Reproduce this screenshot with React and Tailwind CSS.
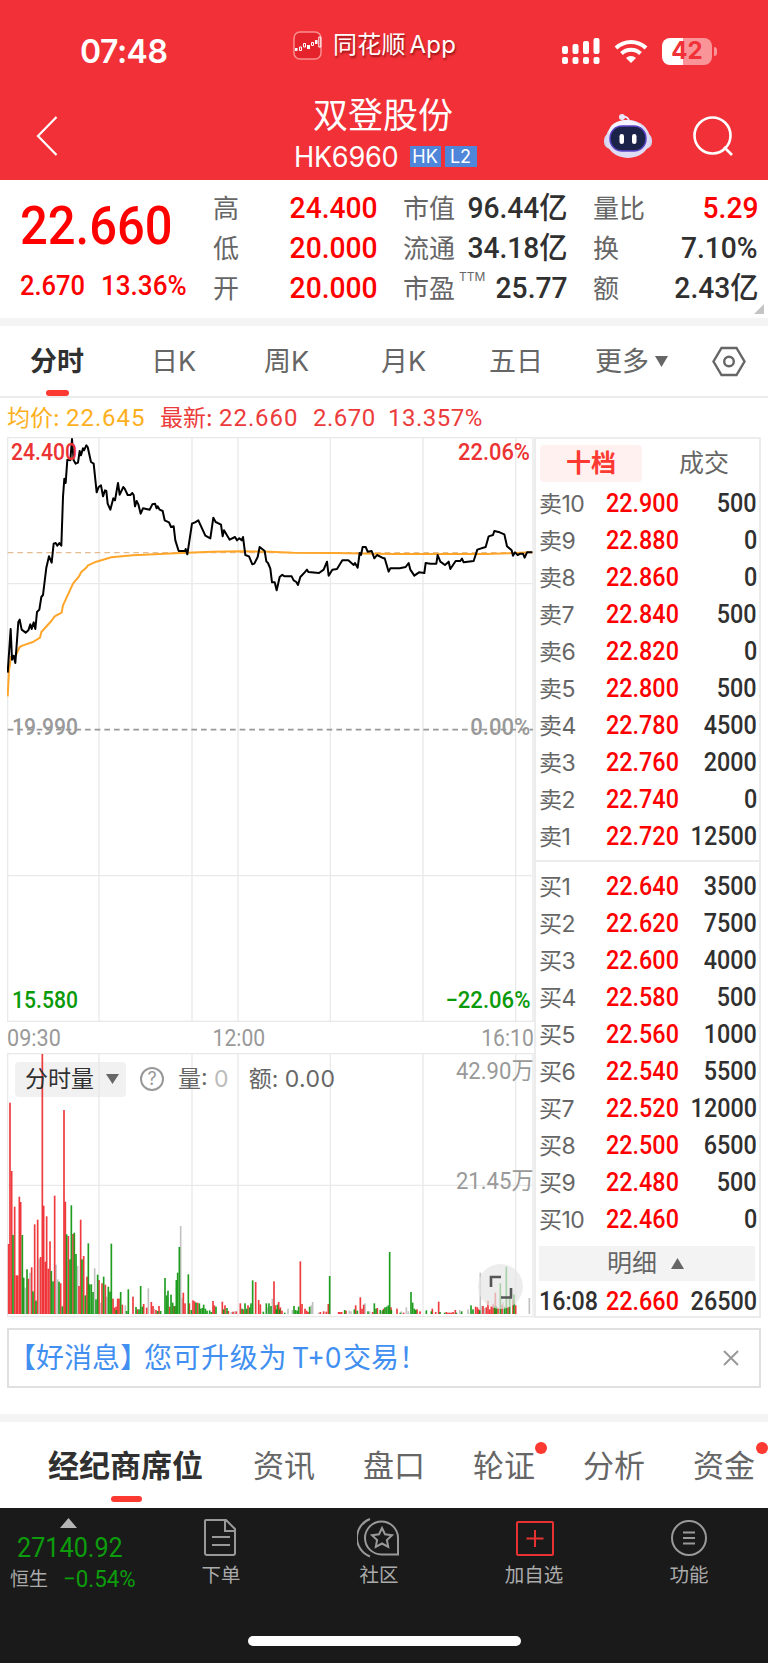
const asks = [
  ['卖10', '22.900', '500'],
  ['卖9', '22.880', '0'],
  ['卖8', '22.860', '0'],
  ['卖7', '22.840', '500'],
  ['卖6', '22.820', '0'],
  ['卖5', '22.800', '500'],
  ['卖4', '22.780', '4500'],
  ['卖3', '22.760', '2000'],
  ['卖2', '22.740', '0'],
  ['卖1', '22.720', '12500'],
]

const bids = [
  ['买1', '22.640', '3500'],
  ['买2', '22.620', '7500'],
  ['买3', '22.600', '4000'],
  ['买4', '22.580', '500'],
  ['买5', '22.560', '1000'],
  ['买6', '22.540', '5500'],
  ['买7', '22.520', '12000'],
  ['买8', '22.500', '6500'],
  ['买9', '22.480', '500'],
  ['买10', '22.460', '0'],
]

// chart data is stored in thirds of a pixel
const pricePoints =
  '24,727 33,596 37,688 42,676 47,698 56,575 60,568 66,598 78,607 86,600 92,582 96,596 102,576 107,596 112,545 119,538 125,500 130,494 140,412 148,378 156,397 162,340 168,338 173,346 179,338 185,346 190,200 194,145 198,158 203,88 212,90 217,26 222,90 228,100 235,97 240,62 244,75 250,54 253,60 260,45 264,50 274,95 282,100 291,186 297,170 304,165 310,198 316,180 320,182 324,220 332,238 341,204 346,210 355,158 360,193 371,170 375,175 384,194 392,194 398,188 402,194 406,228 411,212 416,222 423,250 430,234 450,238 458,222 466,220 471,234 474,228 480,238 489,242 495,270 508,276 514,290 522,288 527,330 537,362 556,362 558,356 563,372 577,280 586,276 596,270 617,316 632,324 641,262 648,275 664,283 669,318 673,300 690,328 706,320 712,330 719,324 726,330 730,320 737,374 748,378 758,402 764,400 774,380 780,350 795,362 800,393 805,398 812,415 817,456 825,456 831,480 840,440 848,433 854,438 876,438 882,450 890,455 895,464 902,440 915,426 922,418 926,425 958,428 972,418 982,394 987,436 998,418 1012,416 1028,390 1046,390 1062,404 1066,398 1074,412 1080,368 1084,374 1089,350 1098,350 1104,364 1116,362 1124,384 1132,374 1152,384 1155,384 1167,424 1172,414 1200,414 1218,410 1227,398 1232,418 1244,436 1258,426 1274,428 1278,398 1292,400 1310,400 1314,374 1322,394 1336,404 1347,394 1352,416 1368,392 1382,392 1387,385 1392,396 1422,392 1433,358 1458,350 1467,318 1480,314 1484,302 1500,306 1514,312 1522,348 1536,360 1540,376 1546,366 1554,374 1562,370 1570,370 1575,382 1582,366 1598,366'

const averagePoints =
  '24,798 28,720 34,680 48,676 60,650 70,645 100,635 121,622 125,605 155,572 165,558 186,547 190,525 220,460 238,438 245,425 258,414 265,405 290,394 335,381 400,375 480,371 560,367 640,364 720,363 810,364 880,367 1000,368 1180,371 1460,371 1598,366'

const redBars =
  '27,854 31,430 36,635 45,742 50,948 54,948 59,712 63,728 86,958 96,924 105,795 114,781 123,893 128,284 132,739 137,907 141,771 146,928 151,846 165,709 183,972 193,452 197,727 206,830 220,824 238,980 243,781 252,890 262,952 298,962 307,972 317,976 340,1018 344,1045 349,1042 354,1018 358,1018 368,1036 400,1012 413,1050 432,1034 441,1045 455,1028 460,1040 469,1052 478,1040 510,1042 523,1040 551,1000 556,1032 569,1032 580,1023 585,1026 594,1030 640,1025 644,1038 668,1027 676,1038 686,1055 700,1057 710,1056 722,1032 731,1050 745,1038 768,968 777,1022 782,1035 823,966 827,1038 837,1028 842,1044 847,1054 902,906 907,1034 916,1048 921,1054 925,1058 962,1058 972,1056 980,1057 986,1034 1017,1058 1021,1058 1026,1058 1039,1054 1068,1038 1082,1014 1087,1048 1092,1036 1119,1058 1133,1046 1152,1048 1174,1044 1192,1048 1212,1060 1252,1050 1261,1056 1298,1048 1308,1058 1317,1027 1340,1058 1345,1060 1350,1060 1355,1060 1360,1058 1367,1052 1428,1042 1433,1044 1437,1050 1450,1040 1460,1044 1465,1024 1470,1050 1475,1040 1480,1035 1487,1000 1495,1046 1507,1036 1525,1042 1540,1020 1548,1038'

const greenBars =
  '40,827 68,827 72,955 82,930 100,996 109,1024 155,935 160,966 178,967 188,1041 201,825 211,900 215,738 224,820 229,884 247,900 257,1008 266,852 270,975 275,975 280,998 289,1020 294,946 312,952 326,982 331,997 335,853 350,1052 363,998 381,1055 386,990 409,1043 418,1050 423,980 428,1042 474,1055 483,1055 496,956 501,1008 505,994 514,1006 519,1030 526,1040 530,962 534,940 539,863 566,945 575,1052 589,1030 599,1032 603,1048 608,1046 612,1036 617,1048 622,1054 630,1053 635,1058 649,1042 672,1050 682,1046 727,1048 736,1032 741,1048 750,1044 754,1032 759,963 791,1057 800,1032 808,1032 814,1040 830,1050 833,1036 840,1050 855,1060 883,1040 888,1052 893,1054 897,1042 930,1042 990,950 1035,1052 1064,1050 1073,1054 1105,1056 1124,1032 1129,1048 1142,1052 1150,1052 1156,1044 1161,1042 1166,1038 1170,878 1175,1052 1202,1060 1234,998 1239,1030 1244,1048 1248,1052 1280,1053 1295,1056 1321,1058 1335,1060 1370,1060 1386,1056 1414,1038 1420,1050 1440,1053 1485,1040 1490,1040 1502,972 1515,1042 1520,922 1530,1010 1543,1005'

const grayBars =
  '77,985 91,940 119,898 169,916 174,960 234,920 285,927 303,1030 321,1012 377,1038 446,987 464,1048 543,800 547,1017 695,1058 705,1056 805,1044 818,1018 865,1048 878,1052 935,1038 939,1028 957,1060 1049,1054 1054,1056 1096,1032 1110,1056 1146,1056 1205,1056 1220,1044 1226,1056 1380,1052 1405,1050 1442,940 1447,1040 1455,1046 1510,1028 1589,1016'

const gridX = [298, 577, 715, 992, 1270, 1548]

function Bars({ data, color }) {
  return data.split(' ').map((item) => {
    const [x, top] = item.split(',').map(Number)
    return <rect key={item} x={x - 2.5} y={top} width="5" height={1064 - top} fill={color} opacity="0.9" />
  })
}

function StatusBar() {
  return (
    <div className="flex h-[96px] items-center text-white">
      <div className="w-[214px] pl-[80px] pt-[7px] text-[33px] font-semibold leading-none tracking-[-0.5px]">
        <span className="inline-block origin-left scale-x-[0.97]">07:48</span>
      </div>
      <div className="flex w-[346px] items-center pb-[6px] pl-[79px]">
        <svg className="h-[29px] w-[29px]" viewBox="0 0 29 29" fill="none">
          <rect x="1" y="1" width="27" height="27" rx="6" fill="#e5232d" stroke="#fa8f8f" strokeWidth="1.5" />
          <path d="M2 17h2.500v3H2zM14 14h3v4h-3zM22 9h2.500v4H22z" fill="#fff" />
          <path d="M6.500 16h2v3.500h-2zM10.500 12.500h2v3.500h-2zM18.500 11.500h2v3h-2zM25.800 6h2v10h-2z" stroke="#fff" />
        </svg>
        <span className="ml-[11px] whitespace-nowrap text-[24px] leading-none tracking-[0.2px] [word-spacing:-3px] [text-shadow:1px_2px_2px_rgba(90,0,0,0.6)]">同花顺 App</span>
      </div>
      <div className="flex items-center pt-[6px]">
        <svg className="h-[28px] w-[41px]" viewBox="0 0 41 28" fill="#fff">
          <rect x="2" y="9" width="6" height="8" rx="2" />
          <rect x="12.500" y="7" width="6" height="10" rx="2" />
          <rect x="23" y="4" width="6" height="13" rx="2" />
          <rect x="33.500" y="1" width="6" height="16" rx="2" />
          <rect x="2" y="20" width="6" height="7" rx="2" />
          <rect x="12.500" y="20" width="6" height="7" rx="2" />
          <rect x="23" y="20" width="6" height="7" rx="2" />
          <rect x="33.500" y="20" width="6" height="7" rx="2" />
        </svg>
        <svg className="ml-[13px] h-[26px] w-[34px]" viewBox="0 0 34 26" fill="none" stroke="#fff" strokeWidth="4">
          <path d="M2 10a21.500 21.500 0 0 1 30 0" />
          <path d="M7.500 15.500a13.700 13.700 0 0 1 19 0" />
          <path d="M17 25l-5-5a7.200 7.200 0 0 1 10 0z" fill="#fff" stroke="none" />
        </svg>
        <div className="ml-[14px] flex h-[27px] w-[50px] items-center justify-center rounded-[8px] bg-linear-to-r from-white from-42% to-[#f99598] to-42% text-[24px] font-bold leading-none text-[#f13037]">42</div>
        <div className="ml-[2px] h-[9px] w-[3px] rounded-r-full bg-[#f99598]" />
      </div>
    </div>
  )
}

function Header() {
  return (
    <header className="h-[180px] bg-[#f13037]">
      <StatusBar />
      <div className="flex h-[79px] items-center text-white">
        <div className="w-[200px] pl-[36px]">
          <svg className="h-[40px] w-[22px]" viewBox="0 0 22 40" fill="none" stroke="#fff" strokeWidth="2.200">
            <path d="M20.500 1L2 20l18.500 19" />
          </svg>
        </div>
        <div className="flex w-[366px] flex-col items-center pt-[2px]">
          <div className="text-[35px] leading-[40px]">双登股份</div>
          <div className="flex h-[43px] items-center pl-1">
            <span className="w-[106px] origin-left scale-x-[0.97] text-[28px] leading-none tracking-[-0.3px]">HK6960</span>
            <span className="ml-[10px] flex h-[21px] w-[31px] items-center justify-center bg-[#4f86d9] text-[18px] leading-none">HK</span>
            <span className="ml-[4px] flex h-[21px] w-[32px] items-center justify-center bg-[#4f86d9] text-[18px] leading-none">L2</span>
          </div>
        </div>
        <svg className="ml-[37px] h-[46px] w-[50px]" viewBox="0 0 50 46">
          <path d="M19 4q7-1 7 5" fill="none" stroke="#e9e6fb" strokeWidth="2" />
          <circle cx="19" cy="4" r="3" fill="#e9e6fb" />
          <rect x="1" y="20" width="48" height="16" rx="7" fill="#d6d3f0" />
          <ellipse cx="25" cy="26" rx="22" ry="19" fill="#dedcf5" />
          <ellipse cx="23" cy="19" rx="17" ry="12" fill="#f6f5ff" />
          <rect x="7" y="13" width="36" height="25" rx="12" fill="#1c2348" stroke="#5b45c9" strokeWidth="1.500" />
          <rect x="16.500" y="21" width="4.500" height="10" rx="2.200" fill="#fff" />
          <rect x="29" y="21" width="4.500" height="10" rx="2.200" fill="#fff" />
        </svg>
        <svg className="ml-[39px] h-[42px] w-[42px]" viewBox="0 0 42 42" fill="none" stroke="#fff" strokeWidth="2.600">
          <circle cx="20.500" cy="20.500" r="18" />
          <path d="M32 32l8 8" />
        </svg>
      </div>
    </header>
  )
}

function Stat({ label, sup, value, red }) {
  return (
    <div className="flex h-[40px] items-center justify-between">
      <span className="flex whitespace-nowrap pt-[2px] text-[26px] leading-none text-[#666]">
        {label}
        {sup && <sup className="ml-[4px] top-[-5px] text-[12px] leading-none">{sup}</sup>}
      </span>
      <span className={`origin-right scale-x-[0.94] whitespace-nowrap font-[Roboto,'Noto_Sans_CJK_SC',sans-serif] text-[30px] font-medium leading-none ${red ? 'text-[#f00]' : 'text-[#303030]'}`}>{value}</span>
    </div>
  )
}

function QuoteSummary() {
  return (
    <section className="relative flex h-[138px] pt-[8px]">
      <div className="w-[213px] pl-[20px] font-[Roboto,sans-serif] font-medium text-[#f00]">
        <div className="flex h-[76px] origin-left scale-x-[0.905] items-center text-[54px] leading-none">22.660</div>
        <div className="mt-[7px] flex h-[30px] items-center gap-[18px] text-[28px] leading-none">
          <span className="w-[63px] origin-left scale-x-[0.91]">2.670</span>
          <span className="origin-left scale-x-[0.93]">13.36%</span>
        </div>
      </div>
      <div className="w-[165px]">
        <Stat label="高" value="24.400" red />
        <Stat label="低" value="20.000" red />
        <Stat label="开" value="20.000" red />
      </div>
      <div className="ml-[25px] w-[165px]">
        <Stat label="市值" value="96.44亿" />
        <Stat label="流通" value="34.18亿" />
        <Stat label="市盈" sup="TTM" value="25.77" />
      </div>
      <div className="ml-[25px] w-[165px]">
        <Stat label="量比" value="5.29" red />
        <Stat label="换" value="7.10%" />
        <Stat label="额" value="2.43亿" />
      </div>
      <svg className="absolute right-[4px] bottom-[4px] h-[10px] w-[10px]" viewBox="0 0 10 10">
        <path d="M10 0v10H0z" fill="#c4c4c4" />
      </svg>
    </section>
  )
}

function PeriodTabs() {
  return (
    <nav className="relative flex h-[72px] items-center border-b-2 border-[#ededed] text-[27px] leading-none text-[#666]">
      <span className="w-[122px] pl-[30px] font-bold text-[#303030]">分时</span>
      <span className="w-[114px] pl-[29px]">日K</span>
      <span className="w-[116px] pl-[28px]">周K</span>
      <span className="w-[110px] pl-[29px]">月K</span>
      <span className="w-[133px] pl-[27px]">五日</span>
      <span className="flex w-[117px] items-center">
        更多
        <svg className="ml-[6px] h-[11px] w-[13px]" viewBox="0 0 13 11">
          <path d="M0 0h13L6.500 11z" fill="#666" />
        </svg>
      </span>
      <svg className="h-[31px] w-[34px]" viewBox="0 0 34 31" fill="none" stroke="#666" strokeWidth="2.400">
        <path d="M9.500 2h15L32.500 15.500l-8 13.500h-15L1.500 15.500z" />
        <circle cx="17" cy="15.500" r="4.800" />
      </svg>
      <i className="absolute bottom-0 left-[46px] h-[6px] w-[23px] rounded-[3px] bg-[#fd3a32]" />
    </nav>
  )
}

function PriceChart() {
  return (
    <div className="relative h-[585px] font-[Roboto,sans-serif] text-[24px] font-medium leading-none">
      <svg className="h-[585px] w-[527px]" viewBox="22 20 1581 1755" fill="none">
        <g stroke="#e9e9e9" strokeWidth="4">
          <rect x="24" y="22" width="1576" height="1751" />
          <path d="M24 460h1576M24 1336h1576" />
          {gridX.map((x) => (
            <path key={x} d={`M${x} 22v1751`} />
          ))}
        </g>
        <path d="M24 367h1576" stroke="#e3bd90" strokeWidth="4" strokeDasharray="17 12" />
        <path d="M24 898h1576" stroke="#999" strokeWidth="5" strokeDasharray="17 12" />
        <polyline points={averagePoints} stroke="#fea52a" strokeWidth="6" strokeLinejoin="round" />
        <polyline points={pricePoints} stroke="#000" strokeWidth="6" strokeLinejoin="round" />
      </svg>
      <span className="absolute top-[3px] left-[4px] origin-left scale-x-[0.88] text-[#ec3333]">24.400</span>
      <span className="absolute top-[3px] right-[4px] origin-right scale-x-[0.91] text-[#ec3333]">22.06%</span>
      <span className="absolute top-[278px] left-[5px] origin-left scale-x-[0.88] text-[#999]">19.990</span>
      <span className="absolute top-[278px] right-[4px] origin-right scale-x-[0.92] text-[#999]">0.00%</span>
      <span className="absolute top-[551px] left-[5px] origin-left scale-x-[0.88] text-[#0a9a0a]">15.580</span>
      <span className="absolute top-[551px] right-[4px] origin-right scale-x-[0.92] text-[#0a9a0a]">−22.06%</span>
    </div>
  )
}

function VolumeChart() {
  return (
    <div className="relative h-[265px] text-[25px] leading-none text-[#666]">
      <div className="absolute top-[9px] left-[8px] h-[35px] w-[111px] rounded-[4px] bg-[#f1f1f1]" />
      <svg className="absolute top-0 left-0 h-[265px] w-[527px]" viewBox="22 281 1581 795" fill="none">
        <g stroke="#e9e9e9" strokeWidth="4">
          <rect x="24" y="283" width="1576" height="789" />
          <path d="M24 678h1576" />
          {gridX.map((x) => (
            <path key={x} d={`M${x} 283v789`} />
          ))}
        </g>
        <Bars data={grayBars} color="#bbb" />
        <Bars data={redBars} color="#ed2529" />
        <Bars data={greenBars} color="#099209" />
      </svg>
      <div className="relative flex h-[52px] items-center pl-[18px]">
        <span className="text-[23px] text-[#303030]">分时量</span>
        <svg className="ml-[12px] h-[10px] w-[13px]" viewBox="0 0 13 10">
          <path d="M0 0h13L6.500 10z" fill="#666" />
        </svg>
        <span className="ml-[21px] flex h-[24px] w-[24px] items-center justify-center rounded-full border-2 border-[#999] text-[18px] text-[#999]">?</span>
        <span className="ml-[14px] whitespace-nowrap text-[23px]">量: <span className="text-[#bbb]">0</span></span>
        <span className="ml-[20px] whitespace-nowrap text-[23px]">额: <span className="tracking-[0.4px]">0.00</span></span>
      </div>
      <div className="absolute top-[7px] right-0 origin-right scale-x-[0.94] font-[Roboto,'Noto_Sans_CJK_SC',sans-serif] text-[23.500px] text-[#999]">42.90万</div>
      <div className="absolute top-[117px] right-0 origin-right scale-x-[0.94] font-[Roboto,'Noto_Sans_CJK_SC',sans-serif] text-[23.500px] text-[#999]">21.45万</div>
      <div className="absolute top-[211px] left-[471px] flex h-[45px] w-[45px] items-center justify-center rounded-full bg-[#e5e5e5]/70">
        <svg className="h-[24px] w-[24px]" viewBox="0 0 24 24" fill="none" stroke="#555" strokeWidth="2.600">
          <path d="M2 12V2h10M22 13v9.500H12" />
        </svg>
      </div>
    </div>
  )
}

function BookRow({ row }) {
  return (
    <div className="flex h-[37px] items-center leading-none">
      <span className="w-[67px] whitespace-nowrap pt-[1px] text-[23px] tracking-[-0.6px] text-[#666]">{row[0]}</span>
      <span className="origin-left scale-x-[0.935] font-[Roboto,sans-serif] text-[25px] font-medium text-[#f00]">{row[1]}</span>
      <span className="ml-auto origin-right scale-x-[0.935] font-[Roboto,sans-serif] text-[25px] font-medium text-[#303030]">{row[2]}</span>
    </div>
  )
}

function OrderBook() {
  return (
    <aside className="h-[881px] w-[227px] border-2 border-[#ececec]">
      <div className="flex h-[46px] items-center pt-[2px] pl-[4px] text-[25px] leading-none">
        <span className="flex h-[37px] w-[102px] items-center justify-center rounded-[4px] bg-[#fff1f0] font-bold text-[#fd3a32]">十档</span>
        <span className="ml-[37px] text-[#666]">成交</span>
      </div>
      <div className="h-[377px] border-b-2 border-[#ececec] pr-[2px] pl-[3px]">
        {asks.map((row) => (
          <BookRow key={row[0]} row={row} />
        ))}
      </div>
      <div className="pt-[6px] pr-[2px] pl-[3px]">
        {bids.map((row) => (
          <BookRow key={row[0]} row={row} />
        ))}
      </div>
      <div className="mr-[4px] ml-[3px] mt-[8px] flex h-[35px] items-center justify-center bg-[#f3f3f3] pr-[3px] text-[25px] leading-none text-[#666]">
        明细
        <svg className="ml-[14px] h-[11px] w-[13px]" viewBox="0 0 13 11">
          <path d="M6.500 0L13 11H0z" fill="#666" />
        </svg>
      </div>
      <div className="flex h-[34px] items-center pt-[7px] pr-[2px] pl-[3px] font-[Roboto,sans-serif] text-[25px] font-medium leading-none text-[#303030]">
        <span className="w-[67px] origin-left scale-x-[0.93]">16:08</span>
        <span className="origin-left scale-x-[0.935] text-[#f00]">22.660</span>
        <span className="ml-auto origin-right scale-x-[0.935]">26500</span>
      </div>
    </aside>
  )
}

function InfoTabs() {
  return (
    <nav className="relative flex h-[86px] items-center text-[31px] leading-none text-[#666]">
      <span className="w-[205px] pl-[48px] font-bold text-[#303030]">经纪商席位</span>
      <span className="ml-[48px]">资讯</span>
      <span className="ml-[48px]">盘口</span>
      <span className="relative ml-[48px]">
        轮证
        <i className="absolute -top-[8px] -right-[12px] h-[12px] w-[12px] rounded-full bg-[#fd3a32]" />
      </span>
      <span className="ml-[48px]">分析</span>
      <span className="relative ml-[48px]">
        资金
        <i className="absolute -top-[8px] -right-[13px] h-[12px] w-[12px] rounded-full bg-[#fd3a32]" />
      </span>
      <i className="absolute bottom-[6px] left-[111px] h-[6px] w-[31px] rounded-[3px] bg-[#fd3a32]" />
    </nav>
  )
}

function NavItem({ label, className, children }) {
  return (
    <div className={`flex flex-col items-center text-[19.500px] leading-none text-[#aaa] ${className}`}>
      <svg className="h-[40px] w-[44px]" viewBox="0 0 44 40" fill="none" stroke="#999" strokeWidth="2">
        {children}
      </svg>
      <span className="mt-[8px] whitespace-nowrap">{label}</span>
    </div>
  )
}

function BottomBar() {
  return (
    <footer className="h-[155px] overflow-hidden bg-[#1a1a1a]">
      <div className="flex h-[128px] pt-[10px]">
        <div className="w-[138px] shrink-0 text-[#0c9c0c]">
          <svg className="ml-[60px] h-[10px] w-[17px]" viewBox="0 0 17 10">
            <path d="M8.500 0L17 10H0z" fill="#b5b5b5" />
          </svg>
          <div className="mt-[6px] ml-[17px] w-[110px] origin-left scale-x-[0.9] font-[Roboto,sans-serif] text-[28px] leading-[28px]">27140.92</div>
          <div className="mt-[3px] ml-[10px] flex h-[28px] items-center">
            <span className="w-[38px] shrink-0 whitespace-nowrap pt-[1px] text-[19px] leading-none text-[#aaa]">恒生</span>
            <span className="ml-[15px] origin-left scale-x-[0.93] whitespace-nowrap font-[Roboto,sans-serif] text-[24px] leading-none">−0.54%</span>
          </div>
        </div>
        <NavItem label="下单" className="ml-[33px] w-[100px]">
          <path d="M7 2h20l9 9v24q0 2-2 2H8q-2 0-2-2V3q0-1 1-1zM26 2v11h10M13 19h18M13 27h18" />
        </NavItem>
        <NavItem label="社区" className="ml-[58px] w-[100px]">
          <path d="M41 36.500H24.500a16.500 16.500 0 1 1 16.500-16.500zM13 1a20 20 0 0 0 0 37.500" />
          <path d="M25 10l3 6.300 7 .9-5.100 4.800 1.300 6.900-6.200-3.400-6.200 3.400 1.300-6.900-5.100-4.800 7-.9z" />
        </NavItem>
        <NavItem label="加自选" className="ml-[55px] w-[100px]">
          <g stroke="#e83232">
            <rect x="5" y="4" width="36" height="33" rx="1" />
            <path d="M23 12v17M14.500 20.500h17" />
          </g>
        </NavItem>
        <NavItem label="功能" className="ml-[55px] w-[100px]">
          <circle cx="22" cy="20" r="17" />
          <path d="M16 14.500h12M16 20h12M16 25.500h12" />
        </NavItem>
      </div>
      <div className="mx-auto h-[10px] w-[273px] rounded-full bg-white" />
    </footer>
  )
}

export default function App() {
  return (
    <div className="h-[1663px] w-[768px] overflow-hidden bg-white font-[Inter,'Noto_Sans_CJK_SC',sans-serif]">
      <Header />
      <QuoteSummary />
      <div className="h-[8px] bg-[#f4f4f4]" />
      <PeriodTabs />
      <div className="flex h-[39px] items-center pl-[7px] text-[23px] leading-none whitespace-pre text-[#ec3b3b]">
        <span className="w-[153px] text-[#fdb01e]">均价: <span className="font-[Roboto,sans-serif] text-[24px] tracking-[0.9px]">22.645</span></span>
        <span className="w-[153px]">最新: <span className="font-[Roboto,sans-serif] text-[24px] tracking-[0.9px]">22.660</span></span>
        <span className="w-[75px] font-[Roboto,sans-serif] text-[24px] tracking-[0.5px]">2.670</span>
        <span className="font-[Roboto,sans-serif] text-[24px] tracking-[0.5px]">13.357%</span>
      </div>
      <div className="flex h-[881px] pl-[7px]">
        <div className="w-[527px]">
          <PriceChart />
          <div className="flex h-[31px] items-center justify-between font-[Roboto,sans-serif] text-[24px] leading-none text-[#999]">
            <span className="origin-left scale-x-[0.9]">09:30</span>
            <span className="-translate-x-[32px] scale-x-[0.88]">12:00</span>
            <span className="origin-right scale-x-[0.88]">16:10</span>
          </div>
          <VolumeChart />
        </div>
        <OrderBook />
      </div>
      <div className="mx-[7px] mt-[10px] flex h-[60px] items-center border-2 border-[#e0e0e0] text-[28px] leading-none whitespace-nowrap text-[#418ff0]">
        <span className="-ml-[1px]">【好消息】</span>
        <span className="-ml-[4px] tracking-[0.6px]">您可升级为</span>
        <span className="ml-[5px] w-[46px] origin-left scale-x-[0.95]">T+0</span>
        <span className="ml-[5px]">交易！</span>
        <svg className="mr-[20px] ml-auto h-[16px] w-[16px]" viewBox="0 0 16 16" fill="none" stroke="#999" strokeWidth="2">
          <path d="M1 1l14 14M15 1L1 15" />
        </svg>
      </div>
      <div className="mt-[26px] h-[8px] bg-[#f4f4f4]" />
      <InfoTabs />
      <BottomBar />
    </div>
  )
}
